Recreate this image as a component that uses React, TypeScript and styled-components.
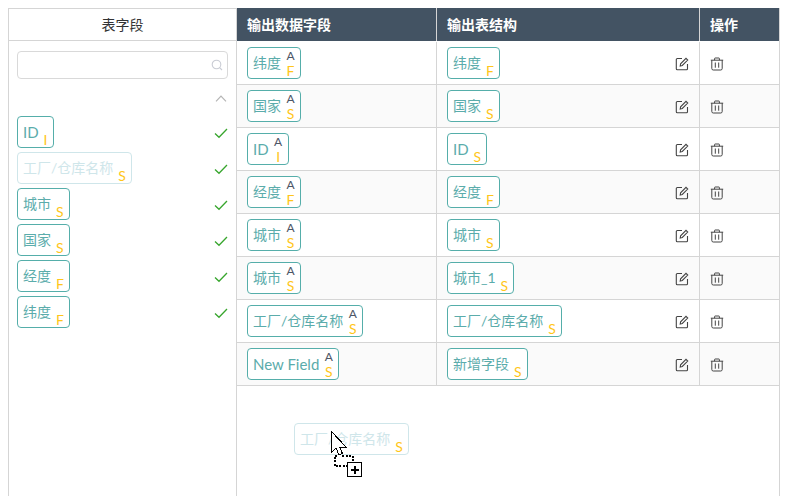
import React from "react";
import styled, { createGlobalStyle } from "styled-components";

const Global = createGlobalStyle`
  html, body { margin: 0; padding: 0; background: #fff; overflow: hidden; }
  body { font-family: Lato, "Noto Sans CJK SC", sans-serif; }
`;
const Page = styled.div`
  position: relative;
  width: 787px;
  height: 496px;
  padding: 8px 7px 0 8px;
  box-sizing: border-box;
  display: flex;
  overflow: hidden;
`;
const Side = styled.aside`
  width: 229px;
  height: 488px;
  flex: none;
  box-sizing: border-box;
  border-left: 1px solid #d5d5d5;
  border-top: 1px solid #d5d5d5;
  border-right: 1px solid #d5d5d5;
`;
const SideTitle = styled.div`
  height: 31px;
  line-height: 31px;
  border-bottom: 1px solid #d5d5d5;
  text-align: center;
  font-size: 14px;
  color: #333;
`;
const SideBody = styled.div`
  padding: 10px 8px 0 8px;
  display: flex;
  flex-direction: column;
`;
const Search = styled.div`
  height: 26px;
  border: 1px solid #d9d9d9;
  border-radius: 4px;
  display: flex;
  align-items: center;
  justify-content: flex-end;
  padding-right: 4px;
  color: #c9ccd4;
`;
const Collapse = styled.div`
  height: 37px;
  box-sizing: border-box;
  display: flex;
  align-items: flex-end;
  justify-content: flex-end;
  color: #b5b5b5;
  padding: 0 1px 14px 0;
`;
const FieldRow = styled.div`
  height: 36px;
  display: flex;
  align-items: flex-start;
  justify-content: space-between;
  color: #38a62e;
`;
const Check = styled.svg`
  width: 14px;
  height: 14px;
  margin: 10px 0 0 0;
  flex: none;
`;
const Tag = styled.div<{ $ghost?: boolean }>`
  display: inline-flex;
  box-sizing: border-box;
  height: 32px;
  border: 1px solid ${(p) => (p.$ghost ? "#cfe6ea" : "#55aeaa")};
  border-radius: 4px;
  padding: 0 5px;
  color: ${(p) => (p.$ghost ? "#cfe6ea" : "#5bacab")};
  background: #fff;
  flex: none;
`;
const Label = styled.span<{ $latin: boolean }>`
  font-size: ${(p) => (p.$latin ? 15 : 14)}px;
  line-height: 30px;
  white-space: nowrap;
`;
const Side2 = styled.span`
  display: flex;
  flex-direction: column;
  align-items: center;
  margin-left: 5px;
  height: 30px;
  justify-content: flex-end;
`;
const Alias = styled.span`
  font-size: 12px;
  line-height: 14px;
  margin-bottom: 1px;
  padding: 0 0.5px;
  color: #4d5666;
`;
const Type = styled.span`
  font-size: 14px;
  line-height: 14px;
  color: #ffc61a;
`;
const Table = styled.div`
  width: 543px;
  flex: none;
  display: flex;
  flex-direction: column;
  height: 488px;
  border-right: 1px solid #d5d5d5;
  box-sizing: border-box;
`;
const Head = styled.div`
  height: 33px;
  background: #435363;
  display: grid;
  grid-template-columns: 199px 263px 1fr;
  flex: none;
  margin-bottom: 1px;
`;
const HeadCell = styled.div`
  color: #fff;
  font-size: 14px;
  font-weight: 700;
  line-height: 33px;
  padding-left: 10px;
  box-sizing: border-box;
  & + & { border-left: 1px solid #d5d5d5; }
`;
const Row = styled.div<{ $alt: boolean }>`
  height: 43px;
  box-sizing: border-box;
  display: grid;
  grid-template-columns: 199px 263px 1fr;
  border-bottom: 1px solid #d5d5d5;
  background: ${(p) => (p.$alt ? "#fafafa" : "#fff")};
  flex: none;
`;
const Cell = styled.div`
  padding: 5px 10px 0 10px;
  box-sizing: border-box;
  display: flex;
  align-items: flex-start;
  justify-content: space-between;
  & + & { border-left: 1px solid #d5d5d5; }
`;
const IconBtn = styled.svg`
  width: 14px;
  height: 14px;
  margin-top: 10px;
  flex: none;
  color: #444;
`;
const Ghost = styled.div`
  position: absolute;
  left: 294px;
  top: 423px;
`;
const Cursor = styled.svg`
  position: absolute;
  left: 330px;
  top: 430px;
  width: 34px;
  height: 50px;
`;

const Field = ({ name, type, alias, ghost }: { name: string; type: string; alias?: boolean; ghost?: boolean }) => (
  <Tag $ghost={ghost}>
    <Label $latin={/^[A-Za-z ]+$/.test(name)}>{name}</Label>
    <Side2>
      {alias && <Alias>A</Alias>}
      <Type>{type}</Type>
    </Side2>
  </Tag>
);

const left = [
  ["ID", "I"],
  ["工厂/仓库名称", "S", true],
  ["城市", "S"],
  ["国家", "S"],
  ["经度", "F"],
  ["纬度", "F"],
] as [string, string, boolean?][];

const rows: [string, string, string][] = [
  ["纬度", "纬度", "F"],
  ["国家", "国家", "S"],
  ["ID", "ID", "I"],
  ["经度", "经度", "F"],
  ["城市", "城市", "S"],
  ["城市", "城市_1", "S"],
  ["工厂/仓库名称", "工厂/仓库名称", "S"],
  ["New Field", "新增字段", "S"],
];

export default function App() {
  return (
    <Page>
      <Global />
      <Side>
        <SideTitle>表字段</SideTitle>
        <SideBody>
          <Search>
            <svg width="12" height="12" viewBox="0 0 12 12" fill="none" stroke="currentColor" strokeWidth="1.1">
              <circle cx="5.5" cy="5.5" r="4.3" />
              <path d="M8.6 8.6 11 11" />
            </svg>
          </Search>
          <Collapse>
            <svg width="12" height="7" viewBox="0 0 12 7" fill="none" stroke="currentColor" strokeWidth="1.2">
              <path d="M1 6.3 6 1l5 5.3" />
            </svg>
          </Collapse>
          {left.map(([n, t, g]) => (
            <FieldRow key={n}>
              <Field name={n} type={t} ghost={g} />
              <Check viewBox="0 0 14 14" fill="none" stroke="currentColor" strokeWidth="1.3">
                <path d="M1 7.5 5 11.3 13 3" />
              </Check>
            </FieldRow>
          ))}
        </SideBody>
      </Side>
      <Table>
        <Head>
          <HeadCell>输出数据字段</HeadCell>
          <HeadCell>输出表结构</HeadCell>
          <HeadCell>操作</HeadCell>
        </Head>
        {rows.map(([a, b, t], i) => (
          <Row key={i} $alt={i % 2 === 1}>
            <Cell>
              <Field name={a} type={t} alias />
            </Cell>
            <Cell>
              <Field name={b} type={b === "ID" ? "S" : t} />
              <IconBtn viewBox="0 0 14 14" fill="none" stroke="currentColor" strokeWidth="1.1">
                <path d="M7 1.5H2.3a1 1 0 0 0-1 1v9.2a1 1 0 0 0 1 1h9.2a1 1 0 0 0 1-1V7" />
                <path d="M5.2 9l.4-2.2L11 1.4l1.7 1.7-5.4 5.4z" />
              </IconBtn>
            </Cell>
            <Cell>
              <IconBtn viewBox="0 0 14 14" fill="none" stroke="currentColor" strokeWidth="1">
                <path d="M.8 3.2h12.4M4.6 3.2V1.5a.5.5 0 0 1 .5-.5h3.8a.5.5 0 0 1 .5.5v1.7M1.8 3.2v8.3a1.5 1.5 0 0 0 1.5 1.5h7.4a1.5 1.5 0 0 0 1.5-1.5V3.2M5.3 5.5v5.2M8.7 5.5v5.2" />
              </IconBtn>
            </Cell>
          </Row>
        ))}
      </Table>
      <Ghost>
        <Field name="工厂/仓库名称" type="S" ghost />
      </Ghost>
      <Cursor viewBox="0 0 34 50" shapeRendering="crispEdges">
        <path d="M1.5 1.5v21l4.5-4.5 3 7 3.5-1.5-3-6.5h6.5z" fill="#fff" stroke="#000" />
        <path d="M7 25.5H4.5v10.5h13M12 25.5h10.5v6" fill="none" stroke="#000" strokeDasharray="2 1.5" strokeWidth="2" />
        <rect x="17.5" y="32.5" width="14" height="14" fill="#fff" stroke="#000" />
        <path d="M20.5 39.5h8M24.5 35.5v8" stroke="#000" strokeWidth="2" />
      </Cursor>
    </Page>
  );
}
